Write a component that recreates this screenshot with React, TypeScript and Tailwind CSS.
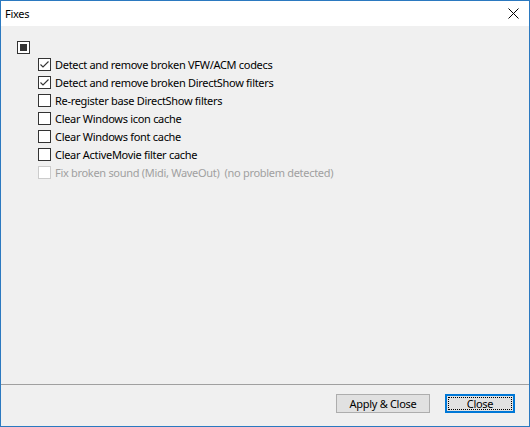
import React from "react";

type Fix = { label: string; checked?: boolean; disabled?: boolean };

const fixes: Fix[] = [
  { label: "Detect and remove broken VFW/ACM codecs", checked: true },
  { label: "Detect and remove broken DirectShow filters", checked: true },
  { label: "Re-register base DirectShow filters" },
  { label: "Clear Windows icon cache" },
  { label: "Clear Windows font cache" },
  { label: "Clear ActiveMovie filter cache" },
  { label: "Fix broken sound (Midi, WaveOut)\u00a0\u00a0(no problem detected)", disabled: true },
];

function CheckBox({ checked, disabled, mixed }: { checked?: boolean; disabled?: boolean; mixed?: boolean }) {
  return (
    <span
      className={
        "relative flex h-[13px] w-[13px] shrink-0 items-center justify-center border bg-white " +
        (disabled ? "border-[#cccccc]" : "border-[#333333]")
      }
    >
      {mixed && <span className="h-[7px] w-[7px] bg-[#333333]" />}
      {checked && (
        <svg width="11" height="11" viewBox="0 0 11 11" className="absolute left-0 top-0">
          <path d="M1.5 5.5 L4 8 L9.5 2.5" fill="none" stroke="#333333" strokeWidth="1.1" />
        </svg>
      )}
    </span>
  );
}

function Button({ children, isDefault }: { children: React.ReactNode; isDefault?: boolean }) {
  return (
    <button
      className={
        "flex h-[19px] items-center justify-center bg-[#e1e1e1] text-black " +
        (isDefault ? "w-[70px] border-2 border-[#0078d7] p-px" : "w-[94px] border border-[#adadad]")
      }
    >
      {isDefault ? (
        <span className="flex h-full w-full items-center justify-center border border-dotted border-black">
          {children}
        </span>
      ) : (
        children
      )}
    </button>
  );
}

export default function App() {
  return (
    <div
      className="flex h-[427px] w-[530px] flex-col border border-[#2b79c0] bg-[#f0f0f0] text-[11px] leading-none tracking-[-0.3px] text-black"
      style={{ fontFamily: '"Noto Sans", "Open Sans", sans-serif' }}
    >
      <div className="flex h-[25px] shrink-0 items-center justify-between bg-white pl-[4px] pr-[10px]">
        <span>Fixes</span>
        <svg width="11" height="11" viewBox="0 0 11 11">
          <path d="M0.5 0.5 L10.5 10.5 M10.5 0.5 L0.5 10.5" stroke="#000" strokeWidth="1" />
        </svg>
      </div>

      <div className="flex-1 pl-[16px] pt-[15px]">
        <CheckBox mixed />
        <div className="mt-[1px] flex flex-col pl-[21px]">
          {fixes.map((f) => (
            <label
              key={f.label}
              className={"flex h-[18px] items-center gap-[4px] " + (f.disabled ? "text-[#a0a0a0]" : "")}
            >
              <CheckBox checked={f.checked} disabled={f.disabled} />
              <span className="whitespace-pre">{f.label}</span>
            </label>
          ))}
        </div>
      </div>

      <div className="flex h-[42px] shrink-0 items-start justify-end gap-[15px] border-t border-[#a0a0a0] pr-[14px] pt-[9px]">
        <Button>Apply &amp; Close</Button>
        <Button isDefault>Close</Button>
      </div>
    </div>
  );
}
